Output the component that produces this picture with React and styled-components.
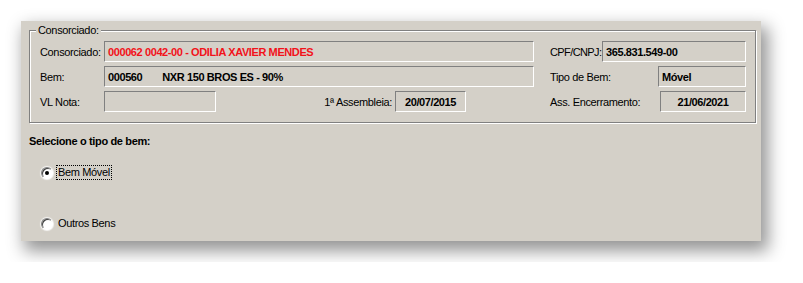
import React, { useState } from 'react';
import styled, { createGlobalStyle } from 'styled-components';

const GlobalStyle = createGlobalStyle`
  html, body {
    margin: 0;
    padding: 0;
    background: #ffffff;
  }
  body {
    font-family: 'Liberation Sans', Arial, sans-serif;
    font-size: 11px;
    color: #000;
  }
`;

const Page = styled.div`
  padding: 21px;
`;

const Panel = styled.div`
  width: 740px;
  height: 220px;
  box-sizing: border-box;
  background: #d4d0c8;
  padding: 3px 5px 0 8px;
  box-shadow: 5px 8px 16px 2px rgba(0, 0, 0, 0.42);
  letter-spacing: -0.35px;
`;

const GroupBox = styled.fieldset`
  margin: 0;
  padding: 4px 0 10px 10px;
  border: 1px solid #808080;
  box-shadow: inset 1px 1px 0 #fff, 1px 1px 0 #fff;
  min-width: 0;
`;

const Legend = styled.legend`
  padding: 0 2px;
  margin-left: -4px;
  line-height: 13px;
  background: #d4d0c8;
`;

const Rows = styled.div`
  display: flex;
  flex-direction: column;
  gap: 4px;
`;

const Row = styled.div`
  display: flex;
  align-items: center;
  height: 21px;
`;

const Label = styled.span`
  width: ${p => p.$w}px;
  flex: none;
  white-space: nowrap;
  text-align: ${p => (p.$right ? 'right' : 'left')};
  padding-right: ${p => (p.$right ? 3 : 0)}px;
  box-sizing: border-box;
  letter-spacing: ${p => (p.$tight ? '-0.6px' : 'inherit')};
`;

const Field = styled.div`
  width: ${p => p.$w}px;
  height: 21px;
  flex: none;
  box-sizing: border-box;
  border: 1px solid;
  border-color: #808080 #ffffff #ffffff #808080;
  display: flex;
  align-items: center;
  justify-content: ${p => (p.$center ? 'center' : 'flex-start')};
  padding: 0 3px;
  font-weight: bold;
  color: ${p => (p.$red ? '#f2121a' : '#000')};
  white-space: nowrap;
  letter-spacing: -0.4px;
`;

const Gap = styled.span`
  width: ${p => p.$w}px;
  flex: none;
`;

const Part = styled.span`
  margin-left: ${p => p.$ml || 0}px;
`;

const Title = styled.div`
  margin: 12px 0 0 0;
  font-weight: bold;
  line-height: 13px;
`;

const Options = styled.div`
  display: flex;
  flex-direction: column;
  gap: 36px;
  margin: 17px 0 0 12px;
`;

const Option = styled.label`
  display: flex;
  align-items: center;
  gap: 4px;
  height: 15px;
  cursor: default;
`;

const Radio = styled.span`
  width: 12px;
  height: 12px;
  box-sizing: border-box;
  border-radius: 50%;
  background: #fff;
  border: 1px solid;
  border-color: #808080 #ffffff #ffffff #808080;
  box-shadow: inset 1px 1px 0 #404040, 0 0 1px 1px rgba(255, 255, 255, 0.8);
  display: flex;
  align-items: center;
  justify-content: center;
  &::after {
    content: '';
    width: 4px;
    height: 4px;
    border-radius: 50%;
    background: ${p => (p.$on ? '#000' : 'transparent')};
  }
`;

const OptionText = styled.span`
  padding: 0 1px;
  line-height: 13px;
  outline: ${p => (p.$focus ? '1px dotted #000' : 'none')};
`;

export default function App() {
  const [tipo, setTipo] = useState('movel');

  return (
    <>
      <GlobalStyle />
      <Page>
        <Panel>
          <GroupBox>
            <Legend>Consorciado:</Legend>
            <Rows>
              <Row>
                <Label $w={64}>Consorciado:</Label>
                <Field $w={430} $red>000062 0042-00 - ODILIA XAVIER MENDES</Field>
                <Gap $w={16} />
                <Label $w={52} $tight>CPF/CNPJ:</Label>
                <Field $w={144}>365.831.549-00</Field>
              </Row>
              <Row>
                <Label $w={64}>Bem:</Label>
                <Field $w={430}>
                  <Part>000560</Part>
                  <Part $ml={20}>NXR 150 BROS ES - 90%</Part>
                </Field>
                <Gap $w={16} />
                <Label $w={108}>Tipo de Bem:</Label>
                <Field $w={88}>Móvel</Field>
              </Row>
              <Row>
                <Label $w={64}>VL Nota:</Label>
                <Field $w={112} />
                <Label $w={179} $right>1ª Assembleia:</Label>
                <Field $w={71} $center>20/07/2015</Field>
                <Gap $w={84} />
                <Label $w={110}>Ass. Encerramento:</Label>
                <Field $w={86} $center>21/06/2021</Field>
              </Row>
            </Rows>
          </GroupBox>
          <Title>Selecione o tipo de bem:</Title>
          <Options>
            <Option onClick={() => setTipo('movel')}>
              <Radio $on={tipo === 'movel'} />
              <OptionText $focus={tipo === 'movel'}>Bem Móvel</OptionText>
            </Option>
            <Option onClick={() => setTipo('outros')}>
              <Radio $on={tipo === 'outros'} />
              <OptionText $focus={tipo === 'outros'}>Outros Bens</OptionText>
            </Option>
          </Options>
        </Panel>
      </Page>
    </>
  );
}
